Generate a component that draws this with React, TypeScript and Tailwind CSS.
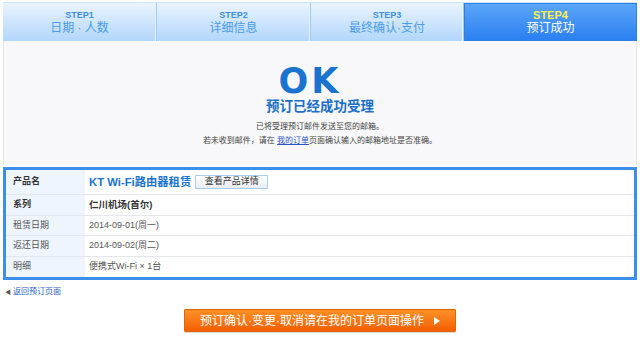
const FONT = {
  fontFamily: '"Liberation Sans", "Noto Sans CJK SC", sans-serif',
};

const steps = [
  { num: "STEP1", label: "日期 · 人数", width: "w-[154px]" },
  { num: "STEP2", label: "详细信息", width: "w-[154px]" },
  { num: "STEP3", label: "最终确认·支付", width: "w-[153px]" },
];

const StepTab = ({
  num,
  label,
  width,
}: {
  num: string;
  label: string;
  width: string;
}) => (
  <div
    className={`${width} flex flex-col items-center justify-center border-r border-[#9ecaf4] bg-gradient-to-b from-[#eaf4fe] to-[#b2d6fb] shadow-[inset_-1px_0_0_#e8f3fe]`}
  >
    <span className="text-[9px] font-bold leading-[10px] text-[#3d8fe6]">
      {num}
    </span>
    <span className="mt-[1px] text-[12px] leading-[14px] text-[#4b9ce9]">
      {label}
    </span>
  </div>
);

const InfoRow = ({
  label,
  strong,
  children,
  height,
  last,
}: {
  label: string;
  strong?: boolean;
  children: React.ReactNode;
  height: string;
  last?: boolean;
}) => (
  <div
    className={`flex ${height} ${last ? "" : "border-b border-[#e3e6eb]"}`}
  >
    <div
      className={`flex w-[79px] items-center bg-[#eef5fd] pl-[7px] text-[9px] ${
        strong ? "font-bold text-[#333]" : "text-[#555]"
      }`}
    >
      {label}
    </div>
    <div className="flex flex-1 items-center pl-[4px] text-[9px] text-[#555]">
      {children}
    </div>
  </div>
);

export default function App() {
  return (
    <div className="h-[345px] w-[640px] overflow-hidden bg-white" style={FONT}>
      <div className="px-[3px] pt-[2px]">
        <div className="flex h-[39px] border-t border-[#cfe5fb]">
          {steps.map((s) => (
            <StepTab key={s.num} {...s} />
          ))}
          <div className="flex w-[173px] flex-col items-center justify-center border border-[#2f7fe0] bg-gradient-to-b from-[#5aa5f8] to-[#2b80f1]">
            <span className="text-[11px] font-bold leading-[12px] text-[#fff04a]">
              STEP4
            </span>
            <span className="text-[12px] leading-[15px] text-white">
              预订成功
            </span>
          </div>
        </div>
      </div>

      <div className="mx-[3px] flex h-[124px] flex-col items-center border-x border-[#e8e8ec] bg-[#f8f8fa]">
        <div
          className="mt-[23px] -ml-[20px] text-[35px] font-black leading-[35px] tracking-[3px] text-[#1a73cf]"
          style={{ fontFamily: '"DejaVu Sans", sans-serif' }}
        >
          OK
        </div>
        <div className="text-[13.5px] font-bold leading-[16px] text-[#1b6fc5]">
          预订已经成功受理
        </div>
        <div className="mt-[5px] flex flex-col items-center text-[8px] leading-[14px] text-[#444]">
          <span>已将受理预订邮件发送至您的邮箱。</span>
          <span>
            若未收到邮件，请在{" "}
            <span className="text-[#2a55c8] underline">我的订单</span>
            页面确认输入的邮箱地址是否准确。
          </span>
        </div>
      </div>

      <div className="mx-[3px] mt-[2px] border-[3px] border-[#3b8eea] bg-white">
        <InfoRow label="产品名" strong height="h-[25px]">
          <span className="text-[11.3px] font-bold text-[#1a73cf]">
            KT Wi-Fi路由器租赁
          </span>
          <span className="ml-[4px] flex h-[14px] w-[73px] items-center justify-center border border-[#a9cdee] bg-gradient-to-b from-white to-[#e9ecf0] text-[9px] text-[#333]">
            查看产品详情
          </span>
        </InfoRow>
        <InfoRow label="系列" strong height="h-[21px]">
          <span className="text-[9.5px] font-bold text-[#333]">
            仁川机场(首尔)
          </span>
        </InfoRow>
        <InfoRow label="租赁日期" height="h-[20px]">
          2014-09-01(周一)
        </InfoRow>
        <InfoRow label="返还日期" height="h-[21px]">
          2014-09-02(周二)
        </InfoRow>
        <InfoRow label="明细" height="h-[20px]" last>
          便携式Wi-Fi × 1台
        </InfoRow>
      </div>

      <div className="mt-[6px] flex items-center pl-[5px] text-[8px] text-[#2a5fc4]">
        <span className="mr-[2px] text-[6px] text-[#555]">◀</span>
        <span>返回预订页面</span>
      </div>

      <div className="mt-[11px] flex justify-center">
        <div className="flex h-[23px] w-[272px] items-center justify-center rounded-[1px] border border-[#e0650a] bg-gradient-to-b from-[#ff9025] to-[#f35d00] shadow-[0_1px_1px_rgba(0,0,0,0.15)]">
          <span className="text-[12px] text-white">
            预订确认·变更·取消请在我的订单页面操作
          </span>
          <svg width="6" height="8" viewBox="0 0 6 8" className="ml-[10px]">
            <path d="M0 0 L6 4 L0 8 Z" fill="#fff" />
          </svg>
        </div>
      </div>
    </div>
  );
}
